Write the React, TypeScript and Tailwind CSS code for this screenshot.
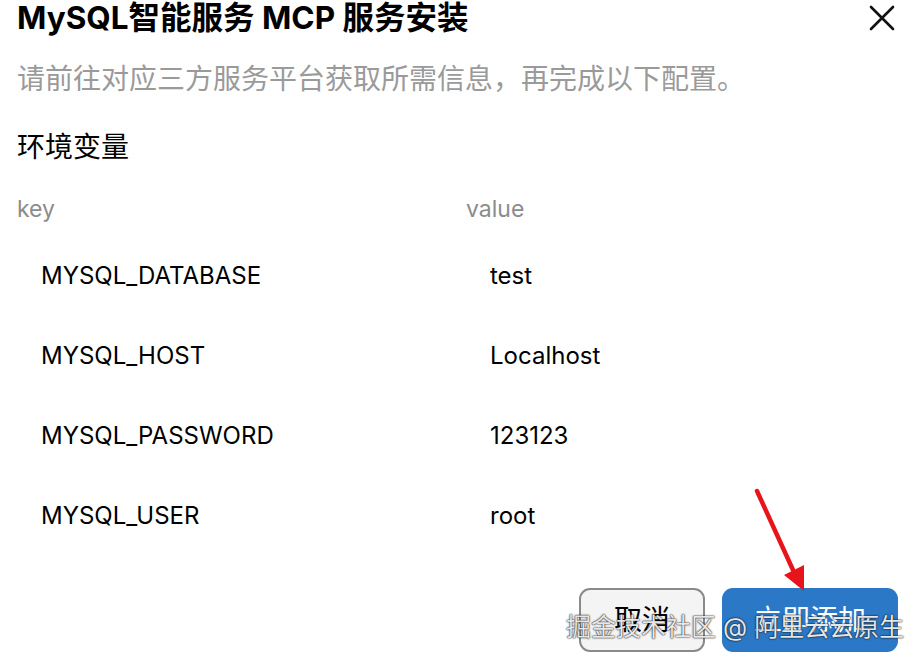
const ENV_VARS = [
  { key: 'MYSQL_DATABASE', value: 'test' },
  { key: 'MYSQL_HOST', value: 'Localhost' },
  { key: 'MYSQL_PASSWORD', value: '123123' },
  { key: 'MYSQL_USER', value: 'root' },
]

const FONT = "font-['Inter','Noto_Sans_CJK_SC',sans-serif]"

export default function App() {
  return (
    <div className={`relative w-[920px] h-[662px] overflow-hidden bg-white text-black ${FONT}`}>
      {/* Header */}
      <div className="flex items-center justify-between pl-[17px] pr-[24px] h-[35px]">
        <h1 className="text-[31.5px] leading-[35px] font-bold">MySQL智能服务 MCP 服务安装</h1>
        <button aria-label="关闭" className="w-[28px] h-[28px] flex items-center justify-center">
          <svg width="26" height="26" viewBox="0 0 26 26" fill="none" stroke="#111" strokeWidth="2.6" strokeLinecap="round">
            <path d="M2 2 L24 24 M24 2 L2 24" />
          </svg>
        </button>
      </div>

      <div className="px-[17px]">
        <p className="mt-[26px] text-[28px] leading-[36px] text-[#9a9a9a]">
          请前往对应三方服务平台获取所需信息，再完成以下配置。
        </p>

        <h2 className="mt-[32px] text-[28px] leading-[36px]">环境变量</h2>

        <div className="mt-[29px] grid grid-cols-[449px_1fr] text-[23px] leading-[30px] text-[#8c8c8c]">
          <span>key</span>
          <span>value</span>
        </div>

        <div className="mt-[12px]">
          {ENV_VARS.map((row) => (
            <div key={row.key} className="grid grid-cols-[449px_1fr] h-[80px] items-center text-[24px]">
              <span className="pl-[24px]">{row.key}</span>
              <span className="pl-[24px]">{row.value}</span>
            </div>
          ))}
        </div>

        {/* Footer buttons */}
        <div className="mt-[32px] flex justify-end gap-[17px] pr-[5px]">
          <button className="w-[126px] h-[64px] rounded-[11px] border-2 border-[#8a8a8a] bg-[#f4f4f4] text-[28px] text-black">
            取消
          </button>
          <button className="w-[176px] h-[64px] rounded-[11px] bg-[#2a78c6] text-[28px] text-white">
            立即添加
          </button>
        </div>
      </div>

      {/* Red arrow annotation */}
      <svg className="absolute left-0 top-0 pointer-events-none" width="920" height="662" viewBox="0 0 920 662">
        <line x1="757" y1="491" x2="793" y2="570" stroke="#e8141c" strokeWidth="4.5" strokeLinecap="round" />
        <polygon points="804,591 784,575 804,565" fill="#e8141c" />
      </svg>

      {/* Watermark */}
      <div className="absolute left-[566px] top-[610px] text-[25px] leading-[34px] text-white/90 whitespace-nowrap [text-shadow:0_0_2px_rgba(0,0,0,0.9),0_0_1px_rgba(0,0,0,0.9)]">
        掘金技术社区 @ 阿里云云原生
      </div>
    </div>
  )
}
